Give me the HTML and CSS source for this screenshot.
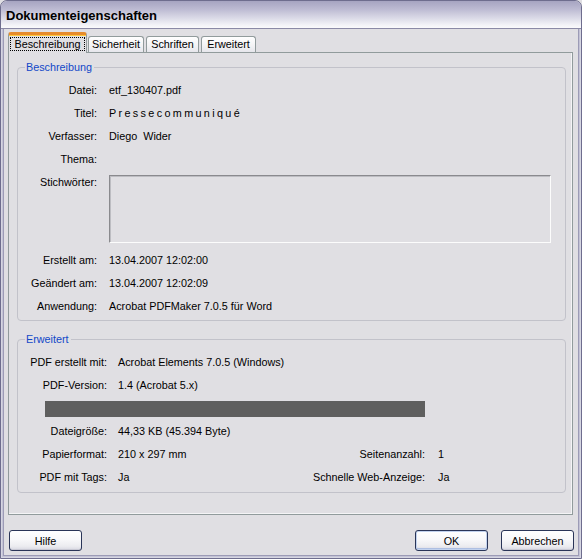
FILE: index.html
```html
<!DOCTYPE html>
<html lang="de">
<head>
<meta charset="utf-8">
<title>Dokumenteigenschaften</title>
<link rel="stylesheet" href="styles.css">
</head>
<body>
<div class="window">
  <div class="titlebar">Dokumenteigenschaften</div>
  <div class="client">
    <div class="tabs">
      <div class="tab tab-active tab-beschreibung"><span class="focus">Beschreibung</span></div>
      <div class="tab tab-sicherheit">Sicherheit</div>
      <div class="tab tab-schriften">Schriften</div>
      <div class="tab tab-erweitert">Erweitert</div>
    </div>
    <div class="panel">
      <fieldset class="group group-desc">
        <legend class="legend">Beschreibung</legend>
        <div class="grid1">
          <div class="lbl">Datei:</div><div class="val">etf_130407.pdf</div>
          <div class="lbl">Titel:</div><div class="val spaced">Pressecommuniqué</div>
          <div class="lbl">Verfasser:</div><div class="val">Diego&nbsp; Wider</div>
          <div class="lbl">Thema:</div><div class="val"></div>
          <div class="lbl lbl-top">Stichwörter:</div><div class="val-box"><div class="textbox"></div></div>
          <div class="lbl">Erstellt am:</div><div class="val">13.04.2007 12:02:00</div>
          <div class="lbl">Geändert am:</div><div class="val">13.04.2007 12:02:09</div>
          <div class="lbl">Anwendung:</div><div class="val">Acrobat PDFMaker 7.0.5 für Word</div>
        </div>
      </fieldset>
      <fieldset class="group group-ext">
        <legend class="legend">Erweitert</legend>
        <div class="grid2">
          <div class="lbl2">PDF erstellt mit:</div><div class="val span3">Acrobat Elements 7.0.5 (Windows)</div>
          <div class="lbl2">PDF-Version:</div><div class="val span3">1.4 (Acrobat 5.x)</div>
          <div class="bar-row"><div class="bar"></div></div>
          <div class="lbl2">Dateigröße:</div><div class="val span3">44,33 KB (45.394 Byte)</div>
          <div class="lbl2">Papierformat:</div><div class="val">210 x 297 mm</div><div class="lbl3">Seitenanzahl:</div><div class="val">1</div>
          <div class="lbl2">PDF mit Tags:</div><div class="val">Ja</div><div class="lbl3">Schnelle Web-Anzeige:</div><div class="val">Ja</div>
        </div>
      </fieldset>
    </div>
    <div class="buttons">
      <button class="btn">Hilfe</button>
      <div class="btn-group">
        <button class="btn btn-default">OK</button>
        <button class="btn">Abbrechen</button>
      </div>
    </div>
  </div>
</div>
</body>
</html>
```
FILE: styles.css
```css
* { box-sizing: border-box; }
html, body { margin: 0; padding: 0; background: #e0dfe3; }
body {
  width: 582px;
  height: 559px;
  overflow: hidden;
  font-family: "Liberation Sans", Arial, sans-serif;
  font-size: 10.8px;
  color: #000;
}
.window {
  width: 582px;
  height: 559px;
  border: 1px solid #6e6d8e;
  border-radius: 7px 7px 0 0;
  background: #e0dfe3;
  box-shadow: inset 0 0 0 1px #d6d6e2, inset 0 0 0 2px #c4c3d6, inset 0 0 0 3px #9c9bb6;
  overflow: hidden;
}
.titlebar {
  height: 28px;
  padding: 0 0 0 5px;
  line-height: 30px;
  font-size: 13px;
  font-weight: bold;
  color: #000;
  background: linear-gradient(#a6a4c1 0%, #bcbad2 30%, #dcdce8 65%, #f4f4f8 90%, #fafafc 100%);
  border-bottom: 1px solid #8b8aa6;
  border-radius: 6px 6px 0 0;
}
.client {
  padding: 0 5px 0 7px;
}
.tabs {
  display: flex;
  align-items: flex-end;
  height: 23px;
  padding-left: 0;
}
.tab {
  height: 16px;
  line-height: 15px;
  text-align: center;
  border: 1px solid #919b9c;
  border-bottom: none;
  border-radius: 3px 3px 0 0;
  background: linear-gradient(#ffffff, #f2f2f4 60%, #e6e6ec);
  margin-left: 1px;
}
.tab-active {
  position: relative;
  z-index: 1;
  height: 21px;
  margin-bottom: -1px;
  margin-left: 0;
  background: #e0dfe3;
  border-top: 3px solid #e68b2c;
  box-shadow: inset 0 1px 0 #ffc83c;
  padding-top: 2px;
  line-height: 13px;
}
.tab-beschreibung { width: 79px; }
.tab-sicherheit { width: 56px; }
.tab-schriften { width: 53px; margin-left: 2px; }
.tab-erweitert { width: 55px; margin-left: 2px; }
.focus {
  display: inline-block;
  border: 1px dotted #000;
  padding: 0 3px;
  line-height: 12px;
}
.panel {
  border: 1px solid #919b9c;
  background: #e0dfe3;
  padding: 8px 6px 21px 8px;
  margin-right: 3px;
  box-shadow: inset -1px -1px 0 #f4f4f6;
}
.group {
  margin: 0;
  padding: 5px 15px 2px 0;
  min-width: 0;
  border: 1px solid #c2c2ca;
  border-radius: 4px;
}
.group-ext {
  margin-top: 12px;
  padding-bottom: 3px;
}
.legend {
  color: #1148c8;
  padding: 0 2px 0 1px;
  margin-left: 7px;
  line-height: 13px;
}
.lbl, .lbl2, .lbl3 {
  text-align: right;
  line-height: 23px;
  white-space: nowrap;
}
.lbl { padding-right: 12px; }
.lbl2 { padding-right: 11px; }
.lbl3 { padding-right: 13px; }
.val {
  line-height: 23px;
  white-space: nowrap;
}
.spaced { letter-spacing: 2.35px; }
.lbl-top { align-self: start; }
.grid1 {
  display: grid;
  grid-template-columns: 91px 1fr;
  grid-template-rows: repeat(4, 23px) 78px repeat(3, 23px);
}
.val-box {
  padding-top: 4px;
  padding-bottom: 6px;
}
.textbox {
  width: 442px;
  height: 68px;
  border: 1px solid;
  border-color: #8a8a8e #fcfcfc #fcfcfc #8a8a8e;
  box-shadow: inset 1px 1px 0 #bdbdc2;
  background: #e0dfe3;
}
.grid2 {
  display: grid;
  grid-template-columns: 100px 173px 147px 1fr;
  grid-auto-rows: 23px;
}
.span3 { grid-column: span 3; }
.bar-row {
  grid-column: 1 / -1;
  display: flex;
  align-items: flex-end;
  padding: 0 0 3px 27px;
}
.bar {
  width: 380px;
  height: 16px;
  background: #5f5f5f;
}
.buttons {
  display: flex;
  justify-content: space-between;
  margin-top: 15px;
  padding: 0 2px 0 1px;
}
.btn-group {
  display: flex;
  gap: 13px;
}
.btn {
  width: 73px;
  height: 21px;
  padding: 0;
  font-family: "Liberation Sans", Arial, sans-serif;
  font-size: 10.8px;
  color: #000;
  border: 1px solid #2a3558;
  border-radius: 3px;
  background: linear-gradient(#ffffff 0%, #f8f8fa 45%, #ececf0 80%, #d8d8e2 100%);
  box-shadow: inset 0 -1px 0 #c9c9d4;
}
.btn-default {
  box-shadow: inset 0 0 0 1px #c2d2ee, inset 0 -2px 0 #aebfe2;
}
```
